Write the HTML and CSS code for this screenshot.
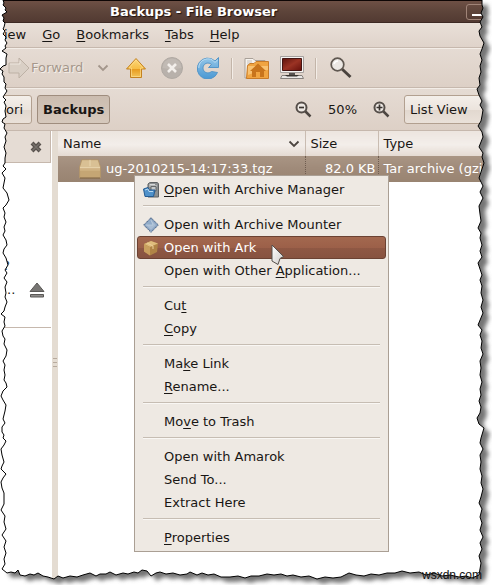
FILE: index.html
```html
<!DOCTYPE html>
<html lang="en">
<head>
<meta charset="utf-8">
<title>Backups - File Browser</title>
<link rel="stylesheet" href="styles.css">
</head>
<body>
<main class="window">
  <header class="titlebar">
    <h1>Backups - File Browser</h1>
    <button class="minimize" aria-label="Minimize"></button>
  </header>

  <nav class="menubar" aria-label="Menu bar">
    <button>iew</button>
    <button><u>G</u>o</button>
    <button><u>B</u>ookmarks</button>
    <button><u>T</u>abs</button>
    <button><u>H</u>elp</button>
  </nav>

  <div class="toolbar">
    <button class="forward" disabled>
      <svg width="22" height="22" viewBox="0 0 22 22"><path d="M1 6H11V1L21 11 11 21V16H1Z" fill="#d9cfc5" stroke="#bdb1a5"/><path d="M2 7H12V3.500" fill="none" stroke="#eee7df"/></svg>
      <span>Forward</span>
    </button>
    <button class="history" aria-label="Forward history">
      <svg width="12" height="8" viewBox="0 0 12 8"><path d="M1.500 1.500 6 6 10.500 1.500" fill="none" stroke="#a3968b" stroke-width="1.800"/></svg>
    </button>
    <button class="tool up" aria-label="Up">
      <svg width="22" height="22" viewBox="0 0 22 22"><defs><linearGradient id="gold" x2="0" y2="1"><stop stop-color="#fbd87c"/><stop offset=".55" stop-color="#f6bd45"/><stop offset=".56" stop-color="#e79b1e"/><stop offset="1" stop-color="#f3c55b"/></linearGradient></defs><path d="M11 1.500 20.500 12H16.500V20.500H5.500V12H1.500Z" fill="url(#gold)" stroke="#c48220" stroke-linejoin="round"/><path d="M11 3 18 11H15.500V19.500H6.500V11H4Z" fill="none" stroke="#ffe29a" opacity=".6"/></svg>
    </button>
    <button class="tool stop" aria-label="Stop" disabled>
      <svg width="22" height="22" viewBox="0 0 22 22"><circle cx="11" cy="11" r="10.500" fill="#b8b1ab" stroke="#b0a9a3"/><path d="M1.500 11A9.500 9.500 0 0 1 20.500 11Q11 13 1.500 11Z" fill="#c1bab4"/><path d="M7 7 15 15M15 7 7 15" stroke="#f3efeb" stroke-width="2.600"/></svg>
    </button>
    <button class="tool reload" aria-label="Reload">
      <svg width="22" height="22" viewBox="0 0 22 22"><defs><linearGradient id="blue" x2="0" y2="1"><stop stop-color="#94c6e8"/><stop offset="1" stop-color="#4a98d3"/></linearGradient></defs><path d="M21.500 .5V10.500H11.500L14.500 7.500A5 5 0 1 0 14.500 14.500L20.500 15.500A10.500 10.500 0 1 1 18 4Z" fill="url(#blue)" stroke="#5596c8"/><path d="M1.800 11A9 9 0 0 1 18 5.500L20.500 3" fill="none" stroke="#b9dcf2"/></svg>
    </button>
    <span class="divider"></span>
    <button class="tool home" aria-label="Home">
      <svg width="25" height="23" viewBox="0 0 25 23"><path d="M1 1.500H9L11 3.500H21V21H1Z" fill="#f5f2ee" stroke="#a9a098"/><path d="M3 3H8V19H3Z" fill="#dfdad5"/><path d="M3.500 8.500 6 6.500H10L12 4.500H24.500V21.500H2.500Z" fill="#f0a441" stroke="#c87b28"/><path d="M4 9H24V13Q14 14 4 18Z" fill="#f9c271"/><path d="M6 14 14 6.500 22 14H20V20H16V15H12V20H8V14Z" fill="#c8741c"/></svg>
    </button>
    <button class="tool computer" aria-label="Computer">
      <svg width="24" height="24" viewBox="0 0 24 24"><defs><linearGradient id="screen" x2="1" y2="1"><stop stop-color="#5d130c"/><stop offset=".5" stop-color="#9b3324"/><stop offset="1" stop-color="#66100b"/></linearGradient></defs><path d="M.5.500H23.500V16.500H.5Z" fill="#f4f3f2" stroke="#a5a19e"/><path d="M2.500 2.500H21.500V14.500H2.500Z" fill="url(#screen)" stroke="#451411"/><path d="M9 17H15V19H9Z" fill="#56524f"/><path d="M2 19.500H22L23.500 22.500H.5Z" fill="#e9e7e5" stroke="#85807c"/><path d="M5 19H19L17 20.500H7Z" fill="#37332f"/></svg>
    </button>
    <span class="divider"></span>
    <button class="tool search" aria-label="Search">
      <svg width="22" height="22" viewBox="0 0 22 22"><path d="M12 12 20.500 20" stroke="#49423d" stroke-width="3"/><circle cx="7.500" cy="7.500" r="6.300" fill="#ece8e4" stroke="#605851" stroke-width="1.700"/><path d="M4 7Q5 4 8 4" fill="none" stroke="#fff" stroke-width="1.500"/></svg>
    </button>
  </div>

  <div class="location">
    <button class="crumb cut">lori</button>
    <button class="crumb current">Backups</button>
    <span class="spring"></span>
    <button class="zoom" aria-label="Zoom out">
      <svg width="17" height="17" viewBox="0 0 17 17"><path d="M10 10 15.500 15.500" stroke="#4d4641" stroke-width="2.500"/><circle cx="6.500" cy="6.500" r="5" fill="#eee9e4" stroke="#554e49" stroke-width="2"/><path d="M4 6.500H9" stroke="#393430" stroke-width="1.700"/></svg>
    </button>
    <span class="percent">50%</span>
    <button class="zoom" aria-label="Zoom in">
      <svg width="17" height="17" viewBox="0 0 17 17"><path d="M10 10 15.500 15.500" stroke="#4d4641" stroke-width="2.500"/><circle cx="6.500" cy="6.500" r="5" fill="#eee9e4" stroke="#554e49" stroke-width="2"/><path d="M3.500 6.500H9.500M6.500 3.500V9.500" stroke="#393430" stroke-width="1.700"/></svg>
    </button>
    <select class="view" aria-label="View as"><option>List View</option></select>
  </div>

  <div class="panes">
    <aside class="sidebar">
      <div class="sidehead">
        <button aria-label="Close side pane"><svg width="12" height="12" viewBox="0 0 12 12"><path d="M2 2 10 10M10 2 2 10" stroke="#57514c" stroke-width="4"/><path d="M2.500 2.500 9.500 9.500M9.500 2.500 2.500 9.500" stroke="#77716c" stroke-width="1.500"/></svg></button>
      </div>
      <div class="places">
        <span>?</span>
        <div class="volume"><span>..</span>
          <button aria-label="Eject"><svg width="16" height="16" viewBox="0 0 16 16"><path d="M8 1 15 9.500H1Z" fill="#777573" stroke="#5a5856"/><path d="M1.500 12.500H14.500V15H1.500Z" fill="#8e8c8a" stroke="#5a5856"/></svg></button>
        </div>
      </div>
    </aside>
    <div class="splitter"><i></i><i></i><i></i></div>
    <section class="files">
      <table>
        <thead><tr>
          <th class="name"><div>Name <svg width="12" height="8" viewBox="0 0 12 8"><path d="M1.500 1.500 6 6 10.500 1.500" fill="none" stroke="#4c4540" stroke-width="1.800"/></svg></div></th>
          <th class="size">Size</th>
          <th>Type</th>
        </tr></thead>
        <tbody><tr>
          <td class="name"><div><svg width="22" height="20" viewBox="0 0 24 22"><path d="M3 1H21L23.500 9V20.500H.5V9Z" fill="#c5a674" stroke="#b4966a"/><path d="M3.500 1.500H20.500L23 9H1Z" fill="#d9c094"/><path d="M1 9H23V13H1Z" fill="#d0b283"/><path d="M12 1V8M1 9.500H23" stroke="#ecd9b4"/><path d="M1 21H23" stroke="#7e633f"/></svg>ug-2010215-14:17:33.tgz</div></td>
          <td class="size">82.0 KB</td>
          <td>Tar archive (gzip</td>
        </tr></tbody>
      </table>
    </section>
  </div>

  <div class="menu" role="menu">
    <button role="menuitem"><svg width="16" height="16" viewBox="0 0 16 16"><path d="M5 2Q6 0 9 .5H14Q16 1 15.500 3V15H5Z" fill="#8b8f91" stroke="#5f6264"/><path d="M6 4H14M6.500 2.500H12" stroke="#d6d8d8"/><path d="M8 4.500H13V9H8Z" fill="#c5c8c9" stroke="#65686a"/><path d="M.5 7 5 5.500 6 8H12L10.500 14.500H2Z" fill="#4f91ca" stroke="#245b91"/><path d="M2 8 5 7 6 9.500H10" fill="none" stroke="#b8d9f0"/></svg><span><u>O</u>pen with Archive Manager</span></button>
    <hr>
    <button role="menuitem"><svg width="16" height="16" viewBox="0 0 16 16"><path d="M8 .7 15.300 8 8 15.300.7 8Z" fill="#8ba5c3" stroke="#415c80" stroke-dasharray="1.500 .7"/><path d="M8 3 13 8 8 13 3 8Z" fill="#a8bcd3"/><path d="M8 3 10 8 3 8" stroke="#c8d6e4" fill="#90abc9" stroke-width=".6"/></svg><span>Open with Archive Mounter</span></button>
    <button role="menuitem" class="active"><svg width="16" height="16" viewBox="0 0 16 16"><path d="M1 4 8 1 15 3.500 14 12 7 15.500 1 11.500Z" fill="#b08446"/><path d="M1 4 8 1 15 3.500 7 7Z" fill="#dfbd7d"/><path d="M1 4 7 7V15.500L1 11.500Z" fill="#c99f5e"/><path d="M4 3 10 6V9" fill="none" stroke="#ecd09a"/></svg><span>Open with Ark</span></button>
    <button role="menuitem"><span>Open with Other <u>A</u>pplication...</span></button>
    <hr>
    <button role="menuitem"><span>Cu<u>t</u></span></button>
    <button role="menuitem"><span><u>C</u>opy</span></button>
    <hr>
    <button role="menuitem"><span>Ma<u>k</u>e Link</span></button>
    <button role="menuitem"><span><u>R</u>ename...</span></button>
    <hr>
    <button role="menuitem"><span>Mo<u>v</u>e to Trash</span></button>
    <hr>
    <button role="menuitem"><span>Open with Amarok</span></button>
    <button role="menuitem"><span>Send To...</span></button>
    <button role="menuitem"><span>Extract Here</span></button>
    <hr>
    <button role="menuitem"><span><u>P</u>roperties</span></button>
    <svg class="pointer" width="14" height="22" viewBox="0 0 14 22"><defs><linearGradient id="arrow" x2="1" y2="1"><stop stop-color="#fff"/><stop offset="1" stop-color="#cfccc9"/></linearGradient></defs><path d="M1 1 12.500 12.500 9 14.500 7 20.500 1 17Z" fill="url(#arrow)" stroke="#55504c"/></svg>
  </div>
</main>

<svg class="torn" viewBox="0 0 492 585" preserveAspectRatio="none" aria-hidden="true">
  <defs>
    <path id="edge" d="M3 0 4 3 3 5 6 8 5 10 7 12 2 15 4 18 3 21 5 23 4 27 3 29 5 31 3 34 6 37 5 40 7 43 5 46 6 48 2 51 7 54 6 58 6 65 3 66 0 69 3 71 2 74 4 77 4 82 6 84 5 88 7 91 5 94 3 97 6 100 4 102 6 106 5 111 6 117 3 119 2 122 5 124 4 128 7 133 5 137 6 141 4 147 6 153 5 158 5 163 3 166 6 169 2 173 5 178 4 183 3 188 7 193 9 200 6 205 3 208 5 213 4 217 6 222 4 227 5 231 3 235 6 240 7 245 4 249 3 253 6 258 8 265 5 270 7 273 4 278 7 282 5 287 6 293 5 297 7 302 5 307 4 311 1 314 5 317 4 322 5 326 2 331 3 336 5 339 4 344 7 350 6 356 3 361 5 365 4 370 5 375 4 380 6 383 7 387 3 391 1 396 3 400 6 405 5 411 4 415 3 419 5 423 2 427 2 432 4 435 3 438 6 441 4 445 1 449 2 455 4 462 2 466 1 469 6 474 3 478 1 482 2 488 4 493 4 504 1 510 5 516 4 522 6 529 2 535 6 541 4 547 6 553 4 559 5 564 2 569 7 573 11 572 15 573 18 570 20 575 25 576 30 574 34 575 38 573 43 576 48 577 54 579 58 576 63 578 70 576 77 577 83 575 90 573 96 576 100 574 106 574 110 572 116 575 123 573 128 574 134 572 138 573 142 570 147 571 151 576 156 573 160 572 166 574 173 573 180 575 187 574 190 572 197 575 202 573 208 575 214 574 221 577 230 577 238 576 245 578 251 576 259 576 267 574 274 575 281 574 287 576 293 575 301 577 309 576 317 579 325 577 333 578 341 577 349 573 356 575 364 576 371 574 379 575 387 573 395 573 402 571 410 573 419 572 426 575 434 573 442 576 450 575 459 577 466 576 472 578 479 575 480 569 481 563 479 556 482 549 480 543 483 537 480 530 482 523 480 517 482 509 479 503 481 497 483 489 481 483 482 476 480 469 481 462 480 455 483 449 480 443 481 438 484 428 479 424 477 418 480 413 481 407 479 401 481 395 480 389 482 382 480 375 481 368 480 361 483 354 481 348 482 341 480 335 482 330 478 325 483 313 481 307 483 300 481 293 482 286 480 280 482 275 480 269 478 263 482 257 480 251 482 245 480 238 481 233 478 228 481 221 480 214 479 206 483 198 480 192 483 186 479 178 481 172 484 163 482 157 483 153 479 147 481 142 483 137 482 132 478 126 481 121 482 116 483 110 480 105 482 101 479 95 477 89 480 85 479 78 481 72 480 66 482 60 480 54 482 49 484 43 480 36 479 31 482 27 480 22 483 17 481 13 483 8 482 5 482 0Z"/>
    <mask id="paper"><rect width="492" height="585" fill="#fff"/><use href="#edge" fill="#000"/></mask>
    <filter id="soft" x="-5%" y="-5%" width="110%" height="110%"><feGaussianBlur stdDeviation="2"/></filter>
  </defs>
  <g mask="url(#paper)">
    <rect width="492" height="585" fill="#fff"/>
    <use href="#edge" x="6" y="5" fill="#747474" filter="url(#soft)"/>
  </g>
  <use href="#edge" fill="none" stroke="#000" stroke-width="1"/>
</svg>
<footer class="credit">wsxdn.com</footer>
</body>
</html>
```
FILE: styles.css
```css
* { box-sizing: border-box; }

body {
  margin: 0;
  position: relative;
  min-height: 100vh;
  display: flex;
  overflow: hidden;
  background: #fff;
  color: #191614;
  font: 13px/18px "DejaVu Sans", sans-serif;
}

button, select {
  margin: 0;
  padding: 0;
  border: 0;
  background: none;
  color: inherit;
  font: inherit;
}

svg { display: block; flex: none; }
u { text-underline-offset: 2px; }

.window {
  position: relative;
  flex: 1;
  display: flex;
  flex-direction: column;
  min-width: 0;
  overflow: hidden;
}

.titlebar {
  display: grid;
  grid-template-columns: 1fr auto;
  align-items: center;
  height: 23px;
  padding-right: 6px;
  border-top: 1px solid #1d0d0a;
  border-bottom: 1px solid #3d2a24;
  background: linear-gradient(#6e5045, #5d443a 50%, #523a32);
}

.titlebar h1 {
  margin: 0;
  padding-left: 110px;
  color: #fff;
  font-size: 13px;
  line-height: 18px;
  text-shadow: 1px 1px 1px #1e120e;
}

.minimize {
  width: 20px;
  height: 16px;
  border: 1px solid #a08478;
  border-radius: 3px;
}

.minimize::before {
  content: "";
  display: block;
  width: 10px;
  height: 2px;
  margin: 6px 0 0 5px;
  background: #fff;
}

.menubar {
  display: flex;
  align-items: center;
  gap: 16px;
  height: 25px;
  padding-left: 4px;
  background: linear-gradient(#e9e0d8, #dfd3ca);
  border-bottom: 1px solid #c6b8ad;
}

.toolbar {
  display: flex;
  align-items: center;
  height: 40px;
  padding-left: 8px;
  border-top: 1px solid #f3ede7;
  border-bottom: 1px solid #c6b8ad;
  background: linear-gradient(#e5dbd3, #ddd0c6);
}

.forward {
  display: flex;
  align-items: center;
  gap: 1px;
  color: #a5978b;
  text-shadow: 1px 1px #f4eee8;
}

.history { margin: 0 16px 0 14px; }
.tool { margin-right: 14px; }
.reload { margin-right: 12px; }
.divider {
  width: 2px;
  height: 21px;
  margin-right: 11px;
  border-left: 1px solid #c3b5a9;
  background: #f3ede7;
}
.home, .computer { margin-right: 11px; }
.search { margin-left: 2px; }

.location {
  display: flex;
  align-items: center;
  height: 43px;
  border-top: 1px solid #f3ede7;
  border-bottom: 1px solid #c6b8ad;
  background: linear-gradient(#e5dbd3, #ddd0c6);
}

.crumb, .view {
  height: 29px;
  border: 1px solid #b2a090;
  border-radius: 3px;
  background: linear-gradient(#f4efea, #ece4dd 50%, #e2d8cf 51%, #eae1d9);
}
.crumb.cut { width: 32px; padding-right: 8px; text-align: right; }
.crumb.current {
  margin-left: 5px;
  padding: 0 5px;
  background: linear-gradient(#cbbcaf, #d6c9bd);
  border-color: #9f8d7e;
  font-weight: bold;
}
.spring { flex: 1; }
.percent { margin: 0 16px; }
.view {
  appearance: none;
  width: 98px;
  margin: 0 -10px 0 14px;
  padding: 0 5px;
}

.panes { flex: 1; display: flex; min-height: 0; }

.sidebar { width: 52px; background: #fff; }
.sidehead {
  display: flex;
  justify-content: flex-end;
  align-items: center;
  height: 32px;
  margin-right: 1px;
  padding-right: 8px;
  border-right: 1px solid #c6b8ad;
  border-bottom: 1px solid #c6b8ad;
  background: #e5dcd4;
}
.places {
  height: 165px;
  margin-right: 1px;
  padding: 94px 6px 0 3px;
  border-bottom: 1px solid #c6b8ad;
  color: #34495e;
}
.volume {
  display: flex;
  justify-content: space-between;
  padding: 6px 0 0 4px;
  color: #191614;
}

.splitter {
  display: flex;
  flex-direction: column;
  justify-content: center;
  align-items: center;
  gap: 3px;
  width: 6px;
  padding-top: 8px;
  background: #e4dcd2;
}
.splitter i { width: 4px; height: 1px; background: #b7aa9d; }

.files { flex: 1; min-width: 0; overflow: hidden; }
table {
  width: 100%;
  border-collapse: collapse;
  table-layout: fixed;
  white-space: nowrap;
}
th, td { height: 25px; padding: 0 5px; text-align: left; font-weight: normal; }
th { background: linear-gradient(#ece5df, #f3eeea 55%, #e4dad2); }
th + th { border-left: 1px solid #c9bcb1; }
td {
  height: 26px;
  background: linear-gradient(#a99584, #9f8a79 50%, #998471);
  color: #fff;
}
td + td { border-left: 1px dotted #6f5d50; }
.name { width: 247px; }
.size { width: 73px; }
td.size { padding: 0 2px; text-align: right; }
th.name div { display: flex; justify-content: space-between; align-items: center; }
td.name div { display: flex; align-items: center; gap: 5px; padding-left: 16px; }

.menu {
  position: absolute;
  top: 175px;
  left: 134px;
  width: 255px;
  padding: 2px;
  border: 1px solid #aa9f94;
  background: #eee9e3;
}
.menu button {
  display: grid;
  grid-template-columns: 16px 1fr;
  column-gap: 5px;
  align-items: center;
  width: 100%;
  height: 23px;
  padding: 0 5px;
  border: 1px solid transparent;
  text-align: left;
  white-space: nowrap;
}
.menu span { grid-column: 2; }
.menu .active {
  border-color: #6b4233;
  border-radius: 3px;
  background: linear-gradient(#a3684f, #9c6049 50%, #8f5844 51%, #875340);
  color: #fff;
}
.menu hr {
  height: 2px;
  margin: 4px 6px 6px;
  border: 0;
  border-top: 1px solid #c6bdb3;
  background: #f9f7f4;
}
.pointer { position: absolute; left: 136px; top: 68px; }

.torn { position: absolute; inset: 0; width: 100%; height: 100%; pointer-events: none; }

.credit {
  position: absolute;
  right: 10px;
  bottom: 2px;
  color: #111;
  font: 12px/16px "Liberation Sans", sans-serif;
}
```
